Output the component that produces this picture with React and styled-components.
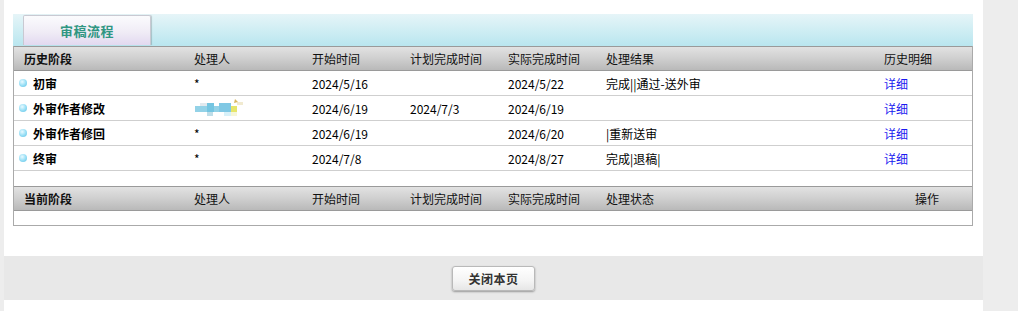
import React from 'react'
import styled, { createGlobalStyle } from 'styled-components'

const GlobalStyle = createGlobalStyle`
  html, body {
    margin: 0;
    padding: 0;
    background: #fff;
  }
  body {
    font-family: "Noto Sans CJK SC", "Microsoft YaHei", sans-serif;
    font-size: 12px;
    color: #000;
  }
`

const history = [
  { id: 1, stage: '初审', handler: '*', start: '2024/5/16', plan: '', done: '2024/5/22', result: '完成||通过-送外审' },
  { id: 2, stage: '外审作者修改', handler: null, start: '2024/6/19', plan: '2024/7/3', done: '2024/6/19', result: '' },
  { id: 3, stage: '外审作者修回', handler: '*', start: '2024/6/19', plan: '', done: '2024/6/20', result: '|重新送审' },
  { id: 4, stage: '终审', handler: '*', start: '2024/7/8', plan: '', done: '2024/8/27', result: '完成|退稿|' },
]

const cols = '170px 118px 98px 98px 98px 278px 98px'

const Page = styled.div`
  display: flex;
  height: 311px;
`

const SideStrip = styled.div`
  width: ${(p) => p.$w}px;
  flex-shrink: 0;
  background: #ededed;
`

const Main = styled.div`
  width: 979px;
  display: flex;
  flex-direction: column;
`

const Panel = styled.div`
  margin: 14px 0 0 9px;
  width: 960px;
`

const TabBar = styled.div`
  height: 32px;
  background: linear-gradient(to bottom, #e6f5f8 0%, #b9e6ef 100%);
  display: flex;
  align-items: flex-end;
  padding-left: 10px;
`

const Tab = styled.div`
  width: 126px;
  height: 29px;
  margin-bottom: 1px;
  border: 1px solid #c9c9d2;
  border-bottom: none;
  border-radius: 2px 2px 0 0;
  box-shadow: 1px 0 1px rgba(0, 0, 0, 0.18);
  background: linear-gradient(to bottom, #fbfbfd 0%, #f0ecf6 55%, #e2d9f0 100%);
  display: flex;
  align-items: center;
  justify-content: center;
  color: #2f9682;
  font-weight: bold;
  font-size: 13px;
  letter-spacing: 0.5px;
`

const Table = styled.div`
  border: 1px solid #aaa;
  border-top: none;
`

const HeadRow = styled.div`
  display: grid;
  grid-template-columns: ${cols};
  height: 23px;
  align-items: center;
  border-top: 1px solid #9a9a9a;
  border-bottom: 1px solid #9a9a9a;
  background: linear-gradient(to bottom, #e2e2e2 0%, #cfcfcf 50%, #b9b9b9 100%);
  color: #111;
`

const Row = styled.div`
  display: grid;
  grid-template-columns: ${cols};
  height: 24px;
  align-items: center;
  border-bottom: 1px solid #cfcfcf;
`

const Blank = styled.div`
  height: ${(p) => p.$h}px;
`

const Cell = styled.div`
  padding-left: 10px;
  white-space: nowrap;
  font-weight: ${(p) => (p.$bold ? 'bold' : 'normal')};
  text-align: ${(p) => (p.$right ? 'right' : 'left')};
  padding-right: ${(p) => (p.$right ? '33px' : '0')};
`

const StageCell = styled.div`
  display: flex;
  align-items: center;
  gap: 6px;
  padding-left: 5px;
  font-weight: bold;
`

const Bullet = styled.span`
  width: 8px;
  height: 8px;
  border-radius: 50%;
  background: radial-gradient(circle at 40% 35%, #eafaff 0%, #9be0f6 50%, #5cc0e4 100%);
`

const DetailLink = styled.a`
  color: #1a1af0;
  text-decoration: none;
  cursor: pointer;
`

const Footer = styled.div`
  margin-top: 30px;
  height: 44px;
  background: #e8e8e8;
  display: flex;
  justify-content: center;
  align-items: center;
`

const CloseButton = styled.button`
  width: 83px;
  height: 25px;
  border: 1px solid #b9b9b9;
  border-radius: 3px;
  background: linear-gradient(to bottom, #ffffff 0%, #f4f4f4 60%, #e6e6e6 100%);
  box-shadow: 0 1px 2px rgba(0, 0, 0, 0.35);
  font-family: inherit;
  font-size: 12px;
  font-weight: bold;
  color: #333;
  letter-spacing: 0.5px;
`

function BlurredName() {
  return (
    <svg width="52" height="20" viewBox="0 0 52 20" style={{ display: 'block' }}>
      <rect x="6" y="5" width="7" height="3" fill="#e1e9ee" />
      <rect x="1" y="8" width="36" height="6" fill="#93d2e7" />
      <rect x="13" y="5" width="7" height="9" fill="#74c5e1" />
      <rect x="25" y="5" width="12" height="9" fill="#80c8e4" />
      <rect x="13" y="14" width="6" height="4" fill="#bedde8" />
      <rect x="30" y="14" width="7" height="4" fill="#d8f1f9" />
      <rect x="37" y="8" width="6" height="6" fill="#e6e66a" />
      <rect x="37" y="14" width="6" height="4" fill="#f6f6d8" />
      <rect x="43" y="4" width="6" height="3" fill="#f1ead0" />
      <path d="M40 5 L41 1 L44 4 Z" fill="#d9b860" />
    </svg>
  )
}

function App() {
  return (
    <React.Fragment>
      <GlobalStyle />
      <Page>
        <SideStrip $w={4} />
        <Main>
          <Panel>
            <TabBar>
              <Tab>审稿流程</Tab>
            </TabBar>
            <Table>
              <HeadRow>
                <Cell $bold>历史阶段</Cell>
                <Cell>处理人</Cell>
                <Cell>开始时间</Cell>
                <Cell>计划完成时间</Cell>
                <Cell>实际完成时间</Cell>
                <Cell>处理结果</Cell>
                <Cell>历史明细</Cell>
              </HeadRow>
              {history.map((h) => (
                <Row key={h.id}>
                  <StageCell>
                    <Bullet />
                    {h.stage}
                  </StageCell>
                  <Cell>{h.handler === null ? <BlurredName /> : h.handler}</Cell>
                  <Cell>{h.start}</Cell>
                  <Cell>{h.plan}</Cell>
                  <Cell>{h.done}</Cell>
                  <Cell>{h.result}</Cell>
                  <Cell>
                    <DetailLink>详细</DetailLink>
                  </Cell>
                </Row>
              ))}
              <Blank $h={15} />
              <HeadRow>
                <Cell $bold>当前阶段</Cell>
                <Cell>处理人</Cell>
                <Cell>开始时间</Cell>
                <Cell>计划完成时间</Cell>
                <Cell>实际完成时间</Cell>
                <Cell>处理状态</Cell>
                <Cell $right>操作</Cell>
              </HeadRow>
              <Blank $h={14} />
            </Table>
          </Panel>
          <Footer>
            <CloseButton>关闭本页</CloseButton>
          </Footer>
        </Main>
        <SideStrip $w={35} />
      </Page>
    </React.Fragment>
  )
}

export default App
